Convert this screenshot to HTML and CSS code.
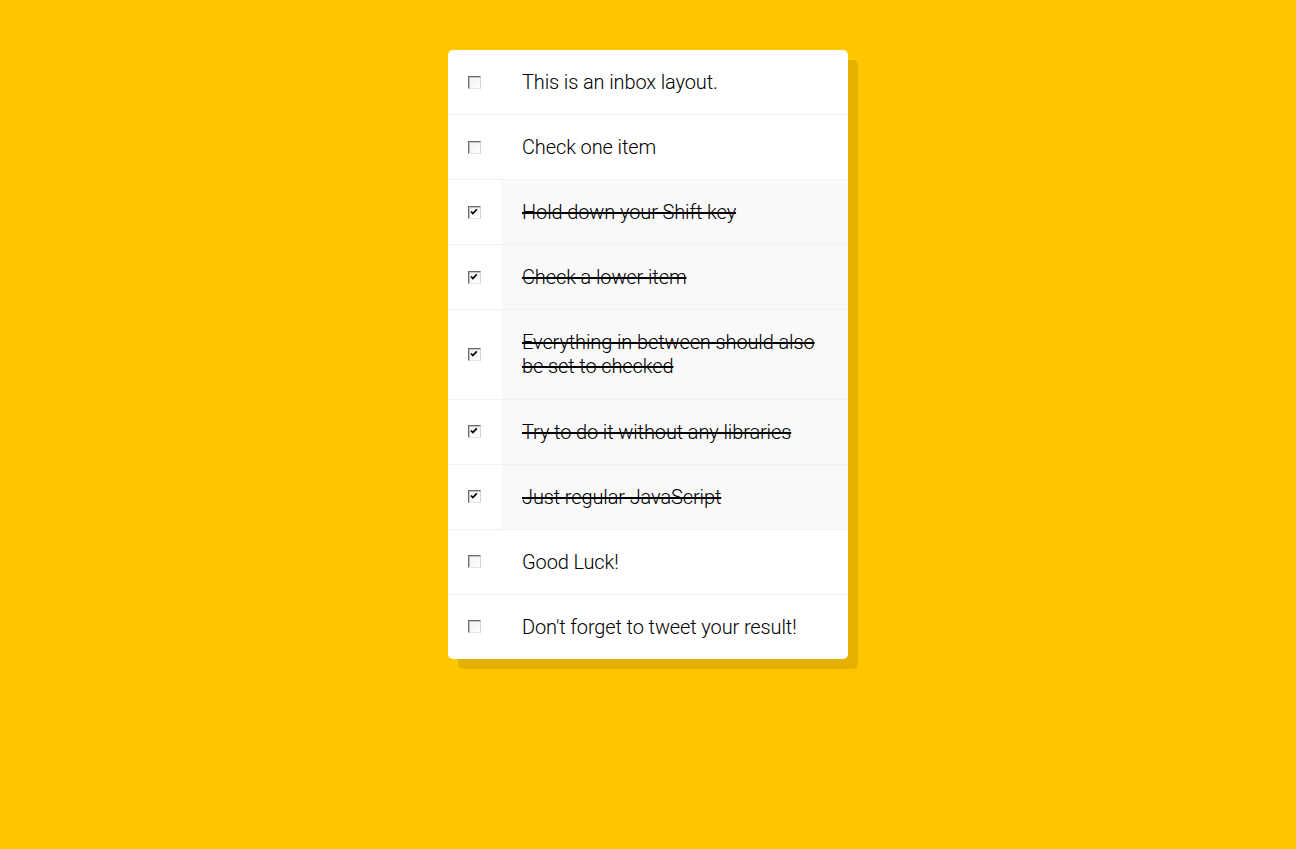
FILE: index.html
```html
<!DOCTYPE html>
<html>
<head>
<meta charset="utf-8">
<title>Inbox</title>
<link rel="stylesheet" href="styles.css">
</head>
<body>
<div class="inbox">
  <div class="item"><input type="checkbox"><p>This is an inbox layout.</p></div>
  <div class="item"><input type="checkbox"><p>Check one item</p></div>
  <div class="item"><input type="checkbox" checked><p>Hold down your Shift key</p></div>
  <div class="item"><input type="checkbox" checked><p>Check a lower item</p></div>
  <div class="item"><input type="checkbox" checked><p>Everything in between should also be set to checked</p></div>
  <div class="item"><input type="checkbox" checked><p>Try to do it without any libraries</p></div>
  <div class="item"><input type="checkbox" checked><p>Just regular JavaScript</p></div>
  <div class="item"><input type="checkbox"><p>Good Luck!</p></div>
  <div class="item"><input type="checkbox"><p>Don't forget to tweet your result!</p></div>
</div>
</body>
</html>
```

FILE: styles.css
```css
html {
  font-family: Roboto, "Liberation Sans", Arial, sans-serif;
  font-size: 20px;
  font-weight: 300;
  background: #ffc600;
}
body {
  margin: 0;
  padding: 50px 0;
}
.inbox {
  max-width: 400px;
  margin: 0 auto;
  background: #fff;
  border-radius: 5px;
  box-shadow: 10px 10px 0 rgba(0, 0, 0, 0.1);
}
.item {
  display: flex;
  align-items: center;
  border-bottom: 1px solid #f1f1f1;
}
.item:last-child {
  border-bottom: 0;
}
input[type="checkbox"] {
  -webkit-appearance: none;
  appearance: none;
  box-sizing: border-box;
  width: 13px;
  height: 13px;
  margin: 20px;
  flex: none;
  border: 1px solid;
  border-color: #6a6a6a #d4d4d4 #e4e4e4 #6a6a6a;
  box-shadow: inset 1px 1px 0 #c4c4c4;
  background: linear-gradient(135deg, #f0f0f0, #ffffff);
  border-radius: 0;
}
input[type="checkbox"]:checked {
  background-image: url("data:image/svg+xml,%3Csvg xmlns='http://www.w3.org/2000/svg' width='11' height='11' viewBox='0 0 11 11'%3E%3Cpath d='M2 4.5 L3.8 6.5 L7.8 2.3' fill='none' stroke='%23000' stroke-width='1.7'/%3E%3C/svg%3E"), linear-gradient(135deg, #f0f0f0, #ffffff);
  background-repeat: no-repeat;
}
p {
  margin: 0;
  padding: 20px 20px 20px 21px;
  flex: 1;
  line-height: 24.1px;
  letter-spacing: -0.12px;
  color: #000;
}
input:checked + p {
  background: #f9f9f9;
  text-decoration: line-through;
}
```
